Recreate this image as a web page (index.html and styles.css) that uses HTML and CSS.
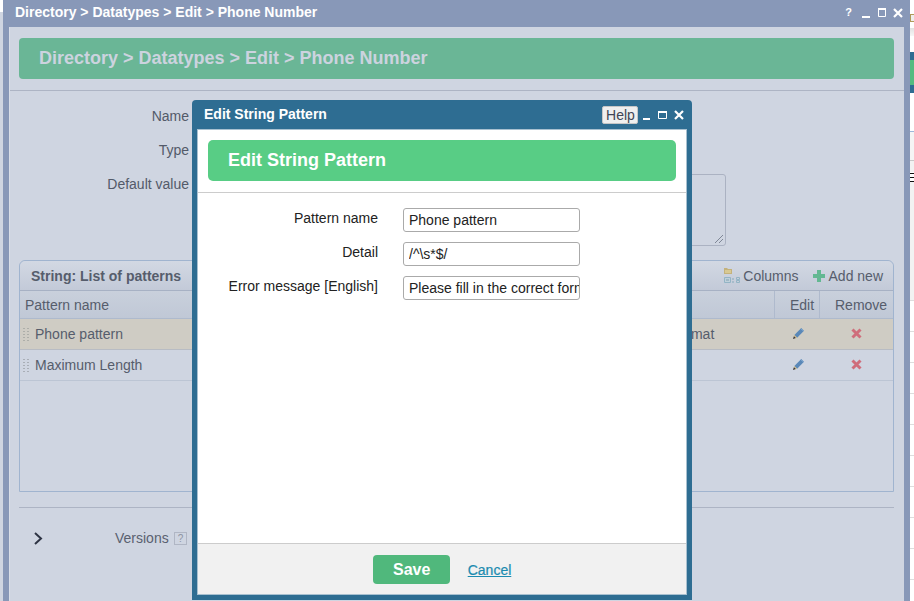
FILE: index.html
```html
<!DOCTYPE html>
<html lang="en">
<head>
<meta charset="utf-8">
<title>Edit String Pattern</title>
<link rel="stylesheet" href="styles.css">
</head>
<body>
<div class="desk">
  <div class="edge-left"></div>

  <section class="window">
    <header class="win-title">
      <span class="win-name">Directory &gt; Datatypes &gt; Edit &gt; Phone Number</span>
      <span class="win-q">?</span>
      <svg class="ctl ctl-main" width="41" height="10" viewBox="0 0 41 10"><path d="M0 8h8v2H0z" fill="#fff"/><path d="M16.5 1.5h7v7h-7z" fill="none" stroke="#fff"/><path d="M16 0h8v2h-8z" fill="#fff"/><path d="M32 1l8 8M40 1l-8 8" stroke="#fff" stroke-width="2.2"/></svg>
    </header>
    <div class="win-body">
      <div class="page-head"><h1>Directory &gt; Datatypes &gt; Edit &gt; Phone Number</h1></div>
      <div class="fields">
        <div class="field"><label>Name</label></div>
        <div class="field"><label>Type</label></div>
        <div class="field field-tall"><label>Default value</label>
          <div class="area"><svg class="grip" width="10" height="10" viewBox="0 0 10 10"><path d="M1 9l8-8M5 9l4-4" stroke="#7f8796" fill="none"/></svg></div>
        </div>
      </div>

      <div class="panel">
        <div class="panel-top">
          <strong>String: List of patterns</strong>
          <span class="tool">
            <svg width="17" height="17" viewBox="0 0 17 17"><path d="M0 1h3l1 1h4v5H0z" fill="#c4b27c"/><path d="M1 3h6v3H1z" fill="#d8c993"/><path d="M0.5 10.500h6v5h-6z" fill="#c0d0da" stroke="#93b4c5"/><path d="M2 13h3" stroke="#7fa2b4"/><path d="M8 11h2v2H8zM8 14h2v2H8z" fill="#a6bccb"/><path d="M12.500 10.500h3v2h-3zM12.500 13.500h3v2h-3z" fill="none" stroke="#93b4c5"/></svg>
            Columns</span>
          <span class="tool tool-add">
            <svg width="12" height="12" viewBox="0 0 12 12"><path d="M4 0h4v4h4v4H8v4H4V8H0V4h4z" fill="#63b892"/></svg>
            Add new</span>
        </div>
        <div class="row row-head">
          <div class="cell">Pattern name</div><div class="cell"></div><div class="cell"></div>
          <div class="cell cell-sep cell-edit">Edit</div><div class="cell cell-sep cell-remove">Remove</div>
        </div>
        <div class="row row-sel">
          <div class="cell"><span class="drag"></span>Phone pattern</div>
          <div class="cell">/^\s*$/</div>
          <div class="cell">Please fill in the correct format</div>
          <div class="cell cell-icon cell-pencil"><svg width="11" height="11" viewBox="0 0 12 12"><path d="M9 0l3 3-7.500 7.500-3-3z" fill="#5a88b8"/><path d="M9 1l2 2" stroke="#8fb6dc"/><path d="M1.500 7.500l3 3L0 12z" fill="#cdbb88"/><path d="M0 12l1-3 2 2z" fill="#334"/></svg></div>
          <div class="cell cell-icon"><svg width="11" height="11" viewBox="0 0 11 11"><path d="M1.500 1.500l8 8M9.500 1.500l-8 8" stroke="#cf6d7b" stroke-width="3"/></svg></div>
        </div>
        <div class="row">
          <div class="cell"><span class="drag"></span>Maximum Length</div>
          <div class="cell">100</div>
          <div class="cell"></div>
          <div class="cell cell-icon cell-pencil"><svg width="11" height="11" viewBox="0 0 12 12"><path d="M9 0l3 3-7.500 7.500-3-3z" fill="#5a88b8"/><path d="M9 1l2 2" stroke="#8fb6dc"/><path d="M1.500 7.500l3 3L0 12z" fill="#cdbb88"/><path d="M0 12l1-3 2 2z" fill="#334"/></svg></div>
          <div class="cell cell-icon"><svg width="11" height="11" viewBox="0 0 11 11"><path d="M1.500 1.500l8 8M9.500 1.500l-8 8" stroke="#cf6d7b" stroke-width="3"/></svg></div>
        </div>
      </div>

      <div class="versions">
        <svg class="chev" width="9" height="13" viewBox="0 0 9 13"><path d="M1 1l6 5.500-6 5.500" fill="none" stroke="#2e3444" stroke-width="2"/></svg>
        <span class="ver-label">Versions</span>
        <span class="ver-help">?</span>
      </div>
    </div>
  </section>

  <div class="edge-right">
    <div class="er-a"></div><div class="er-b"></div><div class="er-c"></div><div class="er-d"></div>
    <div class="er-e"><div></div></div><div class="er-f"></div><div class="er-g"></div><div class="er-h"></div>
    <div class="er-i"></div><div class="er-j"></div><div class="er-k"></div>
  </div>

  <section class="modal">
    <header class="modal-title">
      <span class="modal-name">Edit String Pattern</span>
      <button class="help" type="button">Help</button>
      <svg class="ctl ctl-modal" width="41" height="10" viewBox="0 0 41 10"><path d="M0 8h7v2H0z" fill="#fff"/><path d="M15.500 1.500h8v7h-8z" fill="none" stroke="#fff"/><path d="M15 1h9v2h-9z" fill="#fff"/><path d="M32 1l8 8M40 1l-8 8" stroke="#fff" stroke-width="2.200"/></svg>
    </header>
    <div class="modal-body">
      <div class="modal-head"><h2>Edit String Pattern</h2></div>
      <form class="modal-form">
        <label>Pattern name</label><input type="text" value="Phone pattern">
        <label>Detail</label><input type="text" value="/^\s*$/">
        <label>Error message [English]</label><input type="text" value="Please fill in the correct format">
      </form>
      <footer class="modal-foot">
        <button class="save" type="button">Save</button>
        <a class="cancel" href="#">Cancel</a>
      </footer>
    </div>
  </section>
</div>
</body>
</html>
```

FILE: styles.css
```css
* { box-sizing: border-box; }
html, body { margin: 0; height: 100%; }
body { font-family: "Liberation Sans", Arial, sans-serif; font-size: 14px; background: #fff; overflow: hidden; }
.desk { position: relative; width: 914px; height: 601px; overflow: hidden; background: #fff; }

.edge-left { position: absolute; left: 0; top: 12px; bottom: 0; width: 3px; background: #cfd5e1; }

.window { position: absolute; left: 3px; top: 0; width: 907px; height: 601px; background: #8898b8; display: flex; flex-direction: column; }
.win-title { height: 27px; flex: none; display: flex; align-items: center; padding: 0 8px 3px 12px; color: #fff; font-weight: 700; }
.win-name { flex: 1; }
.win-q { font-size: 11px; margin-right: 10px; }
.ctl-main { margin-top: 1px; margin-right: -1px; }

.win-body { flex: 1; margin: 0 6px; background: #cfd5e1; border-left: 1px solid #d9dee8; display: flex; flex-direction: column; min-height: 0; padding-top: 11px; }
.page-head { height: 41px; margin: 0 10px 11px 9px; border-radius: 4px; background: #6ab696; display: flex; align-items: center; padding-left: 20px; flex: none; }
.page-head h1 { margin: 0; font-size: 18px; font-weight: 700; color: #ccd3df; }

.fields { border-top: 1px solid #adb4c4; padding-top: 8px; height: 170px; flex: none; }
.field { display: flex; height: 34px; align-items: center; color: #535a69; }
.field label { width: 179px; text-align: right; flex: none; }
.field-tall { align-items: flex-start; height: auto; padding-top: 9px; }
.area { position: relative; width: 530px; height: 72px; margin: -2px 0 0 7px; border: 1px solid #abb2c2; border-radius: 3px; }
.grip { position: absolute; right: 1px; bottom: 1px; }

.panel { margin: 0 10px 0 9px; height: 232px; flex: none; border: 1px solid #a0b4cf; border-radius: 6px 6px 0 0; color: #565d6c; }
.panel-top { height: 30px; display: flex; align-items: center; padding: 0 10px 0 11px; background: linear-gradient(#d2d8e3, #c3cad8); border-bottom: 1px solid #a7b1c4; border-radius: 6px 6px 0 0; }
.panel-top strong { flex: 1; font-size: 14px; }
.tool { display: flex; align-items: center; gap: 2px; }
.tool-add { margin-left: 14px; gap: 4px; }
.row { display: grid; grid-template-columns: 249px 252px 253px 45px 74px; height: 31px; border-bottom: 1px solid #bcc5d4; }
.row-head { height: 28px; border-bottom: 1px solid #aebacd; background: linear-gradient(#c9d0dc, #c0c8d6); }
.row-sel { background: #cfccc4; border-bottom-color: #b8bcc4; }
.cell { display: flex; align-items: center; padding-left: 5px; white-space: nowrap; min-width: 0; }
.cell-sep { border-left: 1px solid #afbacd; }
.cell-edit { padding-left: 15px; }
.cell-remove { padding-left: 15px; }
.cell-icon { justify-content: center; padding: 0 0 2px; }
.cell-pencil { padding-left: 3px; }
.drag { width: 8px; height: 15px; margin: 0 5px 0 -3px; flex: none; background-image: radial-gradient(circle, #a9aeb6 0.8px, transparent 0.9px); background-size: 4px 3px; }
.row-sel .drag { background-image: radial-gradient(circle, #adaea9 0.8px, transparent 0.9px); }

.versions { margin: 15px 10px 0 9px; border-top: 1px solid #adb4c4; flex: 1; display: flex; align-items: flex-start; padding-top: 22px; color: #5a6170; }
.chev { margin: 2px 0 0 15px; flex: none; }
.ver-label { margin-left: 72px; width: 59px; }
.ver-help { width: 13px; height: 13px; margin-top: 2px; border: 1px solid #b0b6c4; color: #8d94a2; font-size: 10px; line-height: 11px; text-align: center; }

.edge-right { position: absolute; left: 910px; top: 0; width: 4px; height: 601px; display: flex; flex-direction: column; background: #fff; }
.er-a { height: 14px; }
.er-b { height: 8px; border: 1px solid #b09a5a; border-right: none; background: #eee; }
.er-c { height: 6px; }
.er-d { height: 8px; background: linear-gradient(#e2e2e2, #f6f6f6); }
.er-e { height: 41px; margin-top: 16px; background: #2e6d92; display: flex; align-items: center; flex: none; }
.er-e div { height: 25px; width: 100%; background: #54bb80; }
.er-f { height: 39px; border-bottom: 1px solid #9db7da; flex: none; background: #fff; }
.er-g { height: 29px; border-bottom: 1px solid #c8c8c8; background: #f5f5f5; flex: none; }
.er-h { height: 11px; flex: none; background: #f2f2f2; }
.er-i { height: 10px; flex: none; background: repeating-linear-gradient(#fff 0 1px, #111 1px 2px, #fff 2px 4px); }
.er-j { height: 118px; flex: none; background: #f2f2f2; }
.er-k { flex: 1; background: repeating-linear-gradient(#ddd 0 1px, #fff 1px 31px); }

.modal { position: absolute; left: 192px; top: 100px; width: 500px; height: 500px; background: #2e6d92; border-radius: 4px 4px 0 0; padding: 0 5px 5px; display: flex; flex-direction: column; }
.modal-title { height: 29px; flex: none; display: flex; align-items: center; color: #fff; }
.modal-name { flex: 1; font-weight: 700; padding-left: 7px; margin-top: -1px; }
.help { width: 36px; height: 18px; padding: 0 0 0 1px; margin: 1px 5px 0 0; border: 1px solid #c6c6c6; border-radius: 2px; background: #efefef; color: #3f4654; font: 14px "Liberation Sans", Arial, sans-serif; }
.ctl-modal { margin-right: 3px; margin-top: 1px; }

.modal-body { flex: 1; min-height: 0; background: #fff; border: 1px solid #a8c0d0; display: flex; flex-direction: column; }
.modal-head { flex: none; height: 41px; margin: 10px 10px 11px; border-radius: 5px; background: #58cd85; display: flex; align-items: center; padding-left: 20px; }
.modal-head h2 { margin: 0; font-size: 18px; font-weight: 700; color: #fff; }

.modal-form { flex: 1; border-top: 1px solid #cccccc; padding: 15px 0 0 30px; display: grid; grid-template-columns: 150px 177px; grid-auto-rows: 24px; column-gap: 25px; row-gap: 10px; align-content: start; color: #222; }
.modal-form label { text-align: right; line-height: 20px; white-space: nowrap; }
.modal-form input { width: 177px; height: 24px; padding: 1px 0 1px 5px; margin: 0; border: 1px solid #aaaaaa; border-radius: 3px; font: 14px "Liberation Sans", Arial, sans-serif; color: #222; background: #fff; }

.modal-foot { flex: none; height: 51px; border-top: 1px solid #cccccc; background: #f1f1f1; display: flex; align-items: center; justify-content: center; gap: 18px; }
.save { width: 77px; height: 29px; padding: 2px 0 0 1px; border: none; border-radius: 4px; background: #50b87c; color: #fff; font: 700 16px "Liberation Sans", Arial, sans-serif; }
.cancel { color: #1b8bb0; font-size: 14px; -webkit-text-stroke: 0.2px #1b8bb0; margin-top: 2px; }
```
